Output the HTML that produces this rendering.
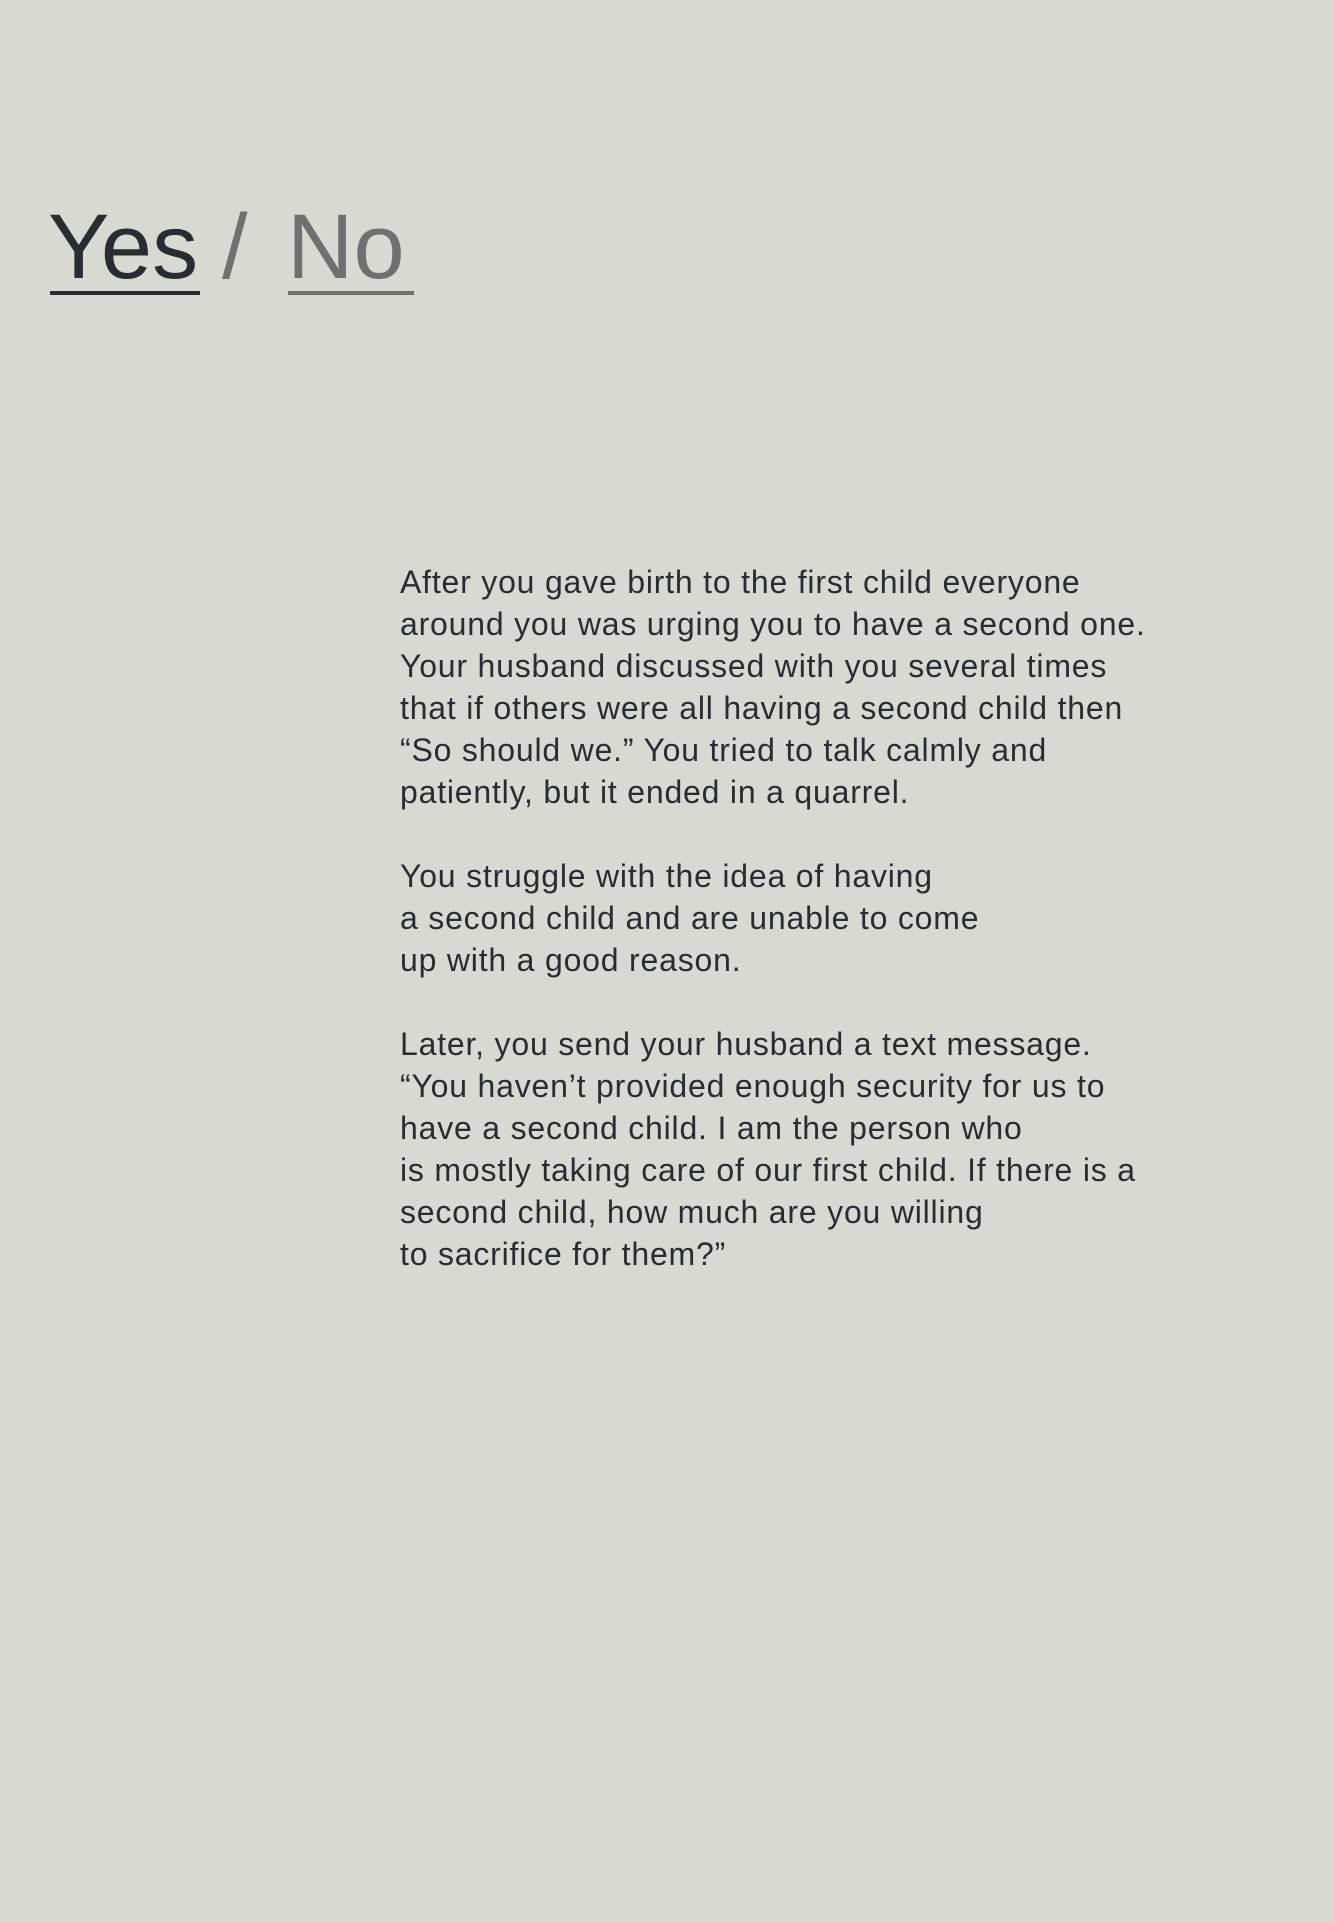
<!DOCTYPE html>
<html><head><meta charset="utf-8"><style>
html,body{margin:0;padding:0}
body{width:1334px;height:1922px;background:#d9d9d3;position:relative;overflow:hidden;font-family:"Liberation Sans",sans-serif;color:#2a2c33}
.h{position:absolute;top:201px;font-size:92px;line-height:92px;white-space:nowrap;letter-spacing:0px}
.u{position:absolute;height:4px;top:291px}
.t{position:absolute;left:400px;top:561px;font-size:32px;line-height:42px;white-space:nowrap;letter-spacing:0.8px}
</style></head><body>
<div class="h" style="left:48px">Yes</div>
<div class="u" style="left:50px;width:150px;background:#2a2c33"></div>
<div class="h" style="left:222px;color:#707070">/</div>
<div class="h" style="left:287px;color:#707070">No</div>
<div class="u" style="left:288px;width:126px;background:#707070"></div>
<div class="t">After you gave birth to the first child everyone<br>around you was urging you to have a second one.<br>Your husband discussed with you several times<br>that if others were all having a second child then<br>“So should we.” You tried to talk calmly and<br>patiently, but it ended in a quarrel.<br><br>You struggle with the idea of having<br>a second child and are unable to come<br>up with a good reason.<br><br>Later, you send your husband a text message.<br>“You haven’t provided enough security for us to<br>have a second child. I am the person who<br>is mostly taking care of our first child. If there is a<br>second child, how much are you willing<br>to sacrifice for them?”</div>
</body></html>
